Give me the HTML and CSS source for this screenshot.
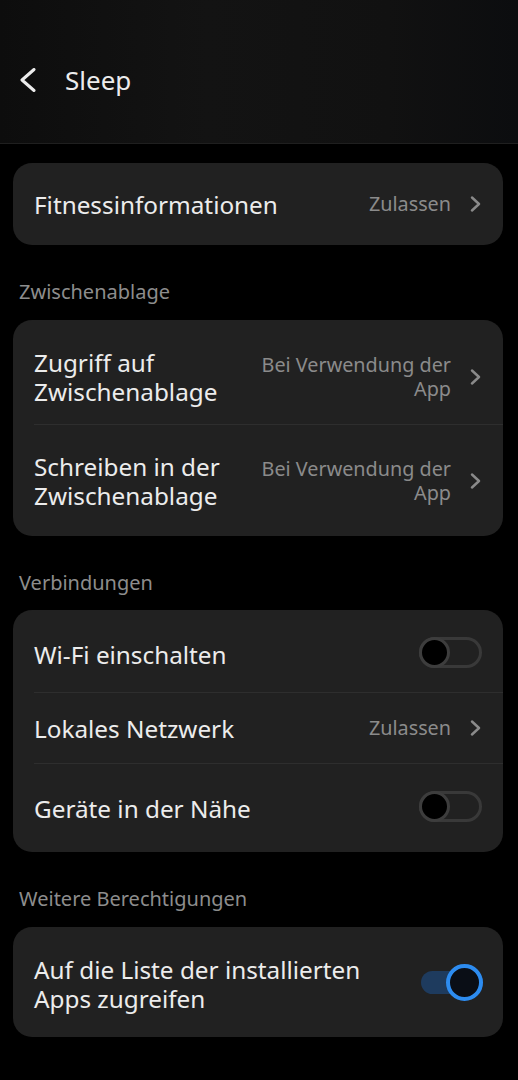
FILE: index.html
```html
<!DOCTYPE html>
<html lang="de">
<head>
<meta charset="utf-8">
<title>Sleep</title>
<link rel="stylesheet" href="styles.css">
</head>
<body>
<header class="header">
  <svg class="back" width="16" height="24" viewBox="0 0 16 24"><polyline points="14,1.5 2,12 14,22.5" fill="none" stroke="#ececec" stroke-width="3" stroke-linecap="round" stroke-linejoin="round"/></svg>
  <h1 class="title">Sleep</h1>
</header>
<main class="content">
  <section class="card card-first">
    <div class="row h82">
      <span class="label">Fitnessinformationen</span>
      <span class="value">Zulassen</span>
      <svg class="chev" width="13" height="16" viewBox="0 0 13 16"><polyline points="3,1.5 10,8 3,14.5" fill="none" stroke="#8a8a8a" stroke-width="2.4" stroke-linecap="round" stroke-linejoin="round"/></svg>
    </div>
  </section>

  <h2 class="section">Zwischenablage</h2>
  <section class="card">
    <div class="row h104 pt10">
      <span class="label">Zugriff auf<br>Zwischenablage</span>
      <span class="value multi">Bei Verwendung der<br>App</span>
      <svg class="chev" width="13" height="16" viewBox="0 0 13 16"><polyline points="3,1.5 10,8 3,14.5" fill="none" stroke="#8a8a8a" stroke-width="2.4" stroke-linecap="round" stroke-linejoin="round"/></svg>
    </div>
    <div class="divider"></div>
    <div class="row h111">
      <span class="label">Schreiben in der<br>Zwischenablage</span>
      <span class="value multi">Bei Verwendung der<br>App</span>
      <svg class="chev" width="13" height="16" viewBox="0 0 13 16"><polyline points="3,1.5 10,8 3,14.5" fill="none" stroke="#8a8a8a" stroke-width="2.4" stroke-linecap="round" stroke-linejoin="round"/></svg>
    </div>
  </section>

  <h2 class="section tight">Verbindungen</h2>
  <section class="card">
    <div class="row h82 pt6">
      <span class="label">Wi-Fi einschalten</span>
      <span class="toggle"><span class="knob"></span></span>
    </div>
    <div class="divider"></div>
    <div class="row h70">
      <span class="label">Lokales Netzwerk</span>
      <span class="value">Zulassen</span>
      <svg class="chev" width="13" height="16" viewBox="0 0 13 16"><polyline points="3,1.5 10,8 3,14.5" fill="none" stroke="#8a8a8a" stroke-width="2.4" stroke-linecap="round" stroke-linejoin="round"/></svg>
    </div>
    <div class="divider"></div>
    <div class="row h88">
      <span class="label">Geräte in der Nähe</span>
      <span class="toggle"><span class="knob"></span></span>
    </div>
  </section>

  <h2 class="section">Weitere Berechtigungen</h2>
  <section class="card">
    <div class="row h110 pt4">
      <span class="label">Auf die Liste der installierten<br>Apps zugreifen</span>
      <span class="toggle on"><span class="knob"></span></span>
    </div>
  </section>
</main>
</body>
</html>
```
FILE: styles.css
```css
* { box-sizing: border-box; }
html, body { margin: 0; padding: 0; }
body {
  background: #000;
  width: 518px;
  height: 1080px;
  overflow: hidden;
  font-family: "Noto Sans", "Open Sans", sans-serif;
  color: #ececec;
}
.header {
  height: 144px;
  background: linear-gradient(90deg, #0d0d0d 0%, #131313 40%, #111111 75%, #0c0d0f 100%);
  border-bottom: 1px solid #1f1f1f;
  display: flex;
  align-items: center;
  padding: 16px 0 0 20px;
}
.back { display: block; margin-right: 29px; }
.title {
  margin: 0;
  font-size: 26px;
  font-weight: 400;
  color: #ececec;
}
.content {
  padding: 19px 15px 0 13px;
}
.card {
  background: #212121;
  border-radius: 19px;
  overflow: hidden;
}
.row {
  display: flex;
  align-items: center;
  padding: 0 21px;
}
.h82 { min-height: 82px; }
.h104 { min-height: 104px; }
.h111 { min-height: 111px; }
.h70 { min-height: 70px; }
.h88 { min-height: 88px; }
.h110 { min-height: 110px; }
.pt4 { padding-top: 4px; }
.pt6 { padding-top: 6px; }
.pt10 { padding-top: 10px; }
.label {
  flex: 1;
  font-size: 24.3px;
  line-height: 29px;
  color: #ececec;
}
.value {
  font-size: 19.8px;
  line-height: 24px;
  color: #8b8b8b;
  margin-right: 18px;
}
.value.multi { text-align: right; }
.chev { display: block; flex: none; }
.divider {
  height: 1px;
  background: #2e2e2e;
  margin-left: 21px;
}
.section {
  margin: 0;
  padding: 35px 0 16px 6px;
  font-size: 20px;
  line-height: 24px;
  font-weight: 400;
  color: #8d8d8d;
}
.section.tight { padding-bottom: 15px; }
.toggle {
  flex: none;
  position: relative;
  width: 63px;
  height: 31px;
  border: 3px solid #393939;
  border-radius: 16px;
  margin-top: -3px;
}
.toggle .knob {
  position: absolute;
  left: -3px;
  top: -3px;
  width: 31px;
  height: 31px;
  border-radius: 50%;
  background: #000;
  border: 3px solid #3d3d3d;
}
.toggle.on {
  width: 62px;
  height: 23px;
  border: none;
  background: #1e3b5e;
  border-radius: 12px;
  margin-right: -1px;
}
.toggle.on .knob {
  left: auto;
  right: 0;
  top: -7px;
  width: 37px;
  height: 37px;
  background: #0a0e16;
  border: 4px solid #2d8cf0;
}
```
